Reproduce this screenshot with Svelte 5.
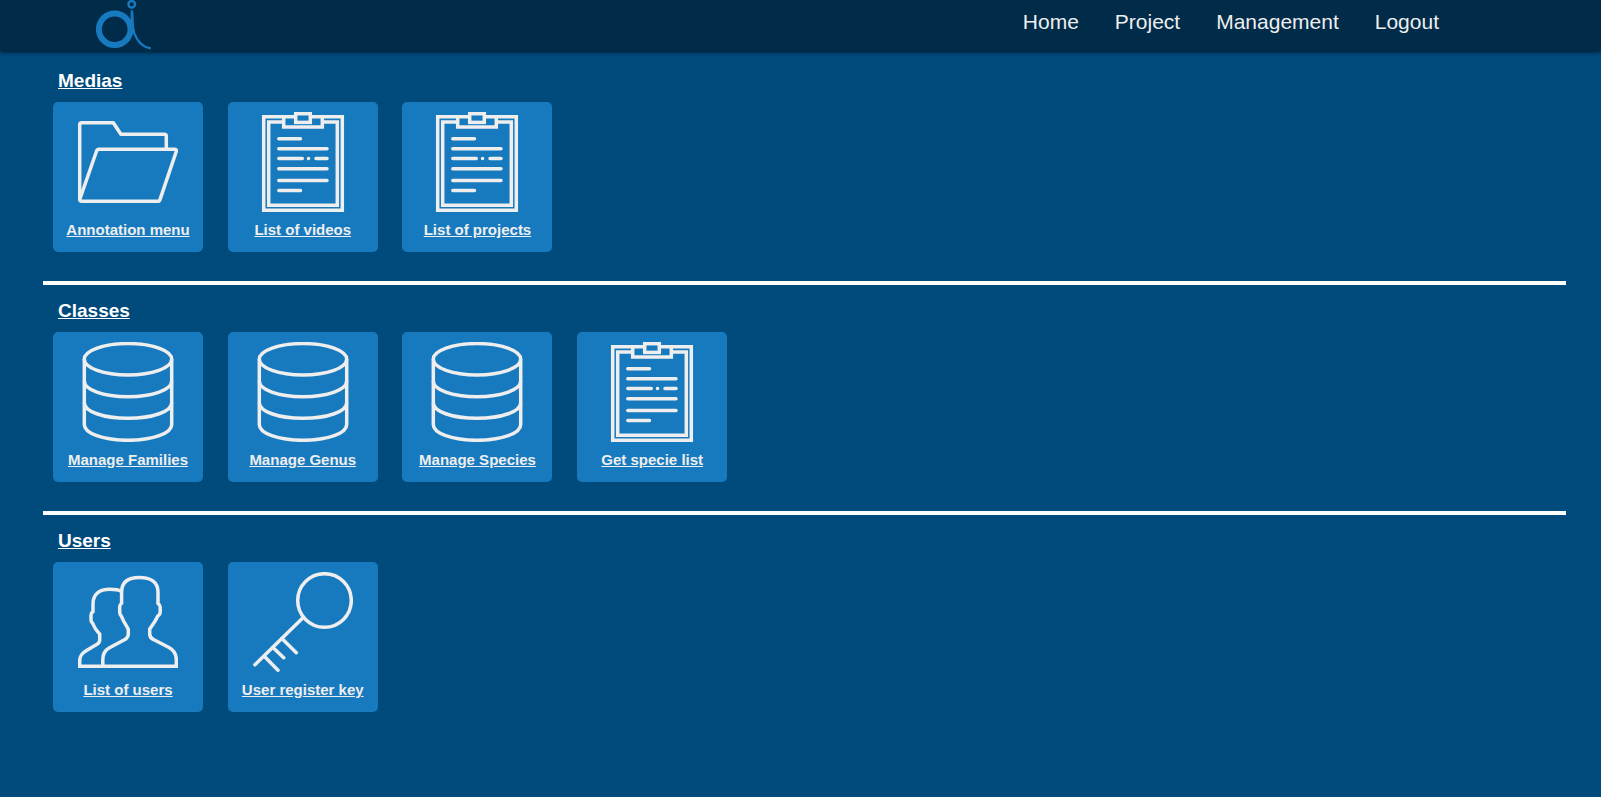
<script>
  const nav = ['Home', 'Project', 'Management', 'Logout'];

  const sections = [
    {
      title: 'Medias',
      items: [
        { label: 'Annotation menu', icon: 'folder' },
        { label: 'List of videos', icon: 'clipboard' },
        { label: 'List of projects', icon: 'clipboard' }
      ]
    },
    {
      title: 'Classes',
      items: [
        { label: 'Manage Families', icon: 'database' },
        { label: 'Manage Genus', icon: 'database' },
        { label: 'Manage Species', icon: 'database' },
        { label: 'Get specie list', icon: 'clipboard' }
      ]
    },
    {
      title: 'Users',
      items: [
        { label: 'List of users', icon: 'users' },
        { label: 'User register key', icon: 'key' }
      ]
    }
  ];
</script>

<header>
  <a class="logo" href="#home" aria-label="Home">
    <svg viewBox="0 0 56 50" width="56" height="50" fill="none" stroke="#177abf">
      <circle cx="18.7" cy="29.3" r="15.8" stroke-width="6" />
      <circle cx="35.7" cy="4.3" r="3.300" stroke-width="2.400" />
      <path d="M35.9 10.2C36 20 36 27 38.2 33.2C41.5 41.5 46.5 47.6 54.8 48.3" stroke-width="2.200" />
      <path d="M36 12C36 22 36.200 27 37.600 33" stroke-width="2.800" />
    </svg>
  </a>
  <nav>
    {#each nav as item}
      <a href="#{item.toLowerCase()}">{item}</a>
    {/each}
  </nav>
</header>

<main>
  {#each sections as section}
    <section>
      <h2>{section.title}</h2>
      <div class="cards">
        {#each section.items as item}
          <a class="card" href="#{item.label.toLowerCase().replaceAll(' ', '-')}">
            <svg viewBox="0 0 100 100" width="100" height="100" aria-hidden="true">
              {#if item.icon === 'folder'}
                <path d="M1.700 87V12.700Q1.700 10.700 3.700 10.700H35.300L42.900 22.300H86.300Q88.300 22.300 88.300 24.300V37.300" />
                <path d="M21 37.300H96.500Q99 37.300 98.200 39.800L82 87.600Q81.400 89.300 79.500 89.300H4Q1.200 89.300 2 86.800L18.600 39Q19.200 37.300 21 37.300Z" />
              {:else if item.icon === 'clipboard'}
                <g class="square">
                  <path d="M43 4.700H10.700V98.300H89.300V4.700H57" />
                  <path d="M30 10H15.700V93.300H84.300V10H70" />
                  <path d="M30.700 4.700V15H69.300V4.700" />
                  <rect x="42.700" y="1.700" width="14.600" height="8.700" />
                </g>
                <path d="M25.800 26.700H47.500M25.800 36.700H74M25.800 46.600H49.300M55.500 46.600H55.600M63 46.600H74M25.800 56.700H74M25.800 68.400H74M25.800 78.400H47.500" />
              {:else if item.icon === 'database'}
                <g class="square">
                  <ellipse cx="50" cy="17.300" rx="43.700" ry="15.700" />
                  <path d="M6.300 17.300V82.500C6.300 91.300 25 98.300 50 98.300S93.700 91.300 93.700 82.500V17.300" />
                  <path d="M6.300 39C6.300 47.700 25 54.700 50 54.700S93.700 47.700 93.700 39" />
                  <path d="M6.300 60.700C6.300 69.400 25 76.300 50 76.300S93.700 69.400 93.700 60.700" />
                </g>
              {:else if item.icon === 'users'}
                <g class="square">
                  <path d="M24.800 94.200V87.500C24.800 82 26.500 78.500 31.500 75.800L46 68Q50.300 66 50.300 62V57.500C48.500 53 45.500 50 44 45.500Q43.500 44 42.500 43Q41.700 42 41.700 40V34.500Q41.700 33 43.600 31.300V20C43.600 10 50.500 5.400 61.500 5.400S80 10 80 20V31.300Q82.200 33 82.200 35V40Q82.200 42 80.700 43.200Q79.500 44 79 45.500C77 50 74.500 53 71.700 57V62Q71.700 66 75.500 67.500L91 75.500C96.500 78.500 98.300 82 98.300 87.500V94.200Z" />
                  <path d="M43.500 19.500C41 17.900 36.500 17.300 32 17.300C21 17.300 15 22.500 15 32V39.500Q13 41 13 43V47.500Q13 49.500 14 50.500Q15.200 51.700 15.700 53.500C17 57 19.500 59.500 21.700 62V68Q21.700 70.800 19 72.300L8.500 78.500C3.500 81.500 1.700 84 1.700 89V94.200H24.800" />
                </g>
              {:else}
                <circle cx="71.500" cy="28.500" r="26.800" />
                <path d="M50.200 45.500L1.900 92.700M28.700 66.300L43.300 80.700M19.700 75.200L30.700 85.700M11 84L25 98.200" />
              {/if}
            </svg>
            <span>{item.label}</span>
          </a>{' '}
        {/each}
      </div>
    </section>
  {/each}
</main>

<style>
  :global(body) {
    background: #004a7c;
    font-family: 'Liberation Sans', Arial, sans-serif;
    font-size: 17px;
  }

  header {
    display: flex;
    justify-content: space-between;
    height: 51px;
    padding: 0 162px 0 6%;
    box-sizing: border-box;
    background: #002b49;
    box-shadow: 0 1px 4px #001424;
  }

  .logo svg {
    display: block;
  }

  nav {
    display: flex;
    gap: 36px;
    padding-top: 10px;
  }

  nav a {
    color: #eee;
    font-size: 21px;
    line-height: 24px;
    text-decoration: none;
  }

  main {
    margin: 0 35px 40px 43px;
  }

  section {
    padding: 19px 0 29px;
  }

  section + section {
    border-top: 4px solid #fff;
    padding-top: 15px;
  }

  h2 {
    margin: 0 0 10px 15px;
    color: #fff;
    font-size: 19px;
    line-height: 22px;
    text-decoration: underline;
  }

  .cards {
    line-height: 20px;
  }

  .card {
    display: inline-block;
    box-sizing: border-box;
    width: 150px;
    height: 150px;
    margin: 0 10px;
    padding-top: 10px;
    border-radius: 5px;
    background: #177abf;
    color: #eee;
    font-size: 15px;
    font-weight: bold;
    text-align: center;
    vertical-align: top;
    text-decoration: underline;
  }

  .card svg {
    display: block;
    margin: 0 auto 8px;
    fill: none;
    stroke: #eee;
    stroke-width: 3.5;
    stroke-linecap: round;
    stroke-linejoin: round;
  }

  .card .square {
    stroke-linecap: butt;
    stroke-linejoin: miter;
  }
</style>
